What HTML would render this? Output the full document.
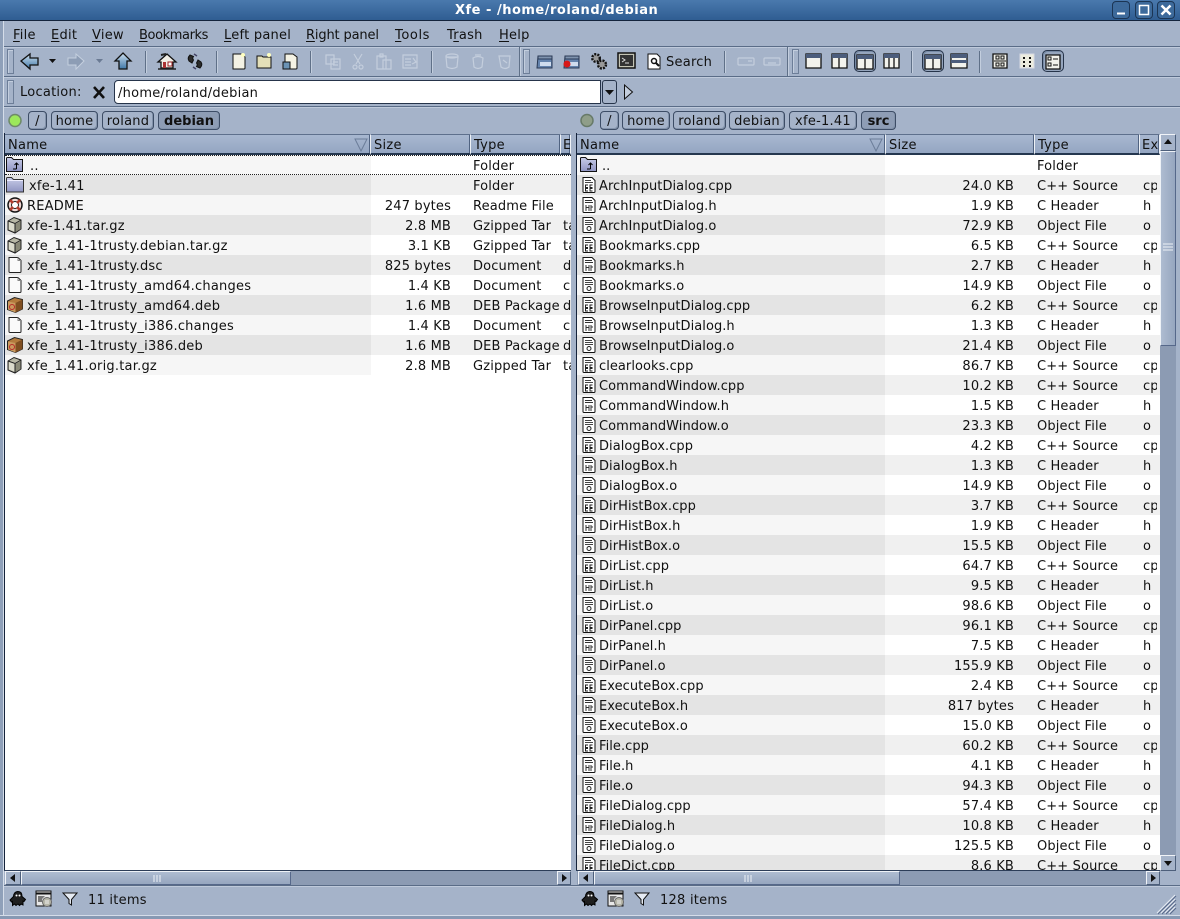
<!DOCTYPE html>
<html><head><meta charset="utf-8"><title>Xfe</title>
<style>
html,body{margin:0;padding:0}
body{width:1180px;height:918px;overflow:hidden;background:#a5b3c9;position:relative;font:13px/20px "DejaVu Sans","Liberation Sans",sans-serif;color:#111;letter-spacing:.25px}
.a{position:absolute;white-space:nowrap}
#title{left:0;top:0;width:1180px;height:20px;background:linear-gradient(#4a79ad,#2f5d92);border-bottom:1.5px solid #14243c}
#title span{position:absolute;left:455px;top:1px;color:#fff;font-weight:700;font-size:13px;letter-spacing:.5px}
.wb{position:absolute;top:1px;width:16px;height:16px;border:1px solid #1b3554;border-radius:4px;background:#3d6a9b}
.line{position:absolute;height:1px;background:#5a6c87;box-shadow:0 1px 0 #bfcadb}
.vs{position:absolute;width:1px;background:#5f7088;box-shadow:1px 0 0 #c3cede}
.grip{position:absolute;width:5px;border:1px solid #6d7e98;box-shadow:inset 1px 1px 0 #c3cede}
.act{position:absolute;width:29px;height:29px;top:47px;box-sizing:border-box;border:1.5px solid #26344a;border-radius:5px;background:#95a5bd;box-shadow:inset 1px 1px 0 #778aa5}
.bc{position:absolute;top:111px;height:19px;box-sizing:border-box;border:1px solid #3d4d66;border-radius:4px;text-align:center;line-height:19px;box-shadow:inset -1px -1px 0 #8393ab;background:#a5b3c9}
.bc.on{font-weight:700;background:#8e9db5;letter-spacing:0}
.hd{position:absolute;top:134px;height:21px;box-sizing:border-box;background:linear-gradient(#a8b8d0,#94a6c2);border-top:1px solid #5e708c;border-bottom:2px solid #25374f;border-right:1px solid #eef2f7;box-shadow:inset -1px 0 0 #506381;padding-left:3px;line-height:21px;overflow:hidden}
.list{position:absolute;top:155px;background:#fff;overflow:hidden;height:715px}
.r{position:relative;height:20px;white-space:nowrap}
.r span{position:absolute;top:0;height:20px;line-height:21px;overflow:hidden;padding-top:1px;box-sizing:content-box}
.r svg{position:absolute;top:1px;width:18px;height:18px}
.L .r:nth-child(even){background:linear-gradient(90deg,#e4e4e4 366px,#f0f0f0 366px)}
.L .r:nth-child(odd){background:linear-gradient(90deg,#f6f6f6 366px,#fff 366px)}
.L .r svg{left:1px}
.L .r span{letter-spacing:.15px}
.L .r .n{left:22px;letter-spacing:.22px}.L .z{left:366px;width:80px;text-align:right}.L .t{left:468px;width:92px}.L .e{left:558px;width:9px}
.R .r:nth-child(even){background:linear-gradient(90deg,#e4e4e4 308px,#f0f0f0 308px)}
.R .r:nth-child(odd){background:linear-gradient(90deg,#f6f6f6 308px,#fff 308px)}
.R .r svg{left:3px}
.R .r span{letter-spacing:.15px}
.R .r .n{left:22px;letter-spacing:.05px}.R .z{left:308px;width:129px;text-align:right}.R .t{left:460px;width:105px}.R .e{left:566px;width:14px}
.sb{position:absolute;box-sizing:border-box;background:#a5b3c9;border:1px solid #f0f3f8;border-right-color:#4d5f7b;border-bottom-color:#4d5f7b}
.tr{position:absolute;background:#8c9bb3}
.th{position:absolute;box-sizing:border-box;background:linear-gradient(#aebcd1,#96a6bf);border:1px solid #eef2f7;border-right-color:#56688a;border-bottom-color:#56688a}
u{text-decoration:underline;text-underline-offset:2px}
</style></head>
<body>
<svg width="0" height="0" style="position:absolute"><defs>
<linearGradient id="fg" x1="0" y1="0" x2="0" y2="1"><stop offset="0" stop-color="#c9cde8"/><stop offset="1" stop-color="#8f94c2"/></linearGradient>
<linearGradient id="ag" x1="0" y1="0" x2="0" y2="1"><stop offset="0" stop-color="#cfe0f0"/><stop offset="1" stop-color="#3f77a8"/></linearGradient>
<symbol id="up" viewBox="0 0 18 18"><path d="M.5 15.500V2.500q0-1 1-1h4l2 2h9v12z" fill="url(#fg)" stroke="#111"/><path d="M10.500 13V7M8.500 9l2-2 2 2M7 13h3.500" fill="none" stroke="#000"/></symbol>
<symbol id="fo" viewBox="0 0 18 18"><path d="M.5 16V2.500q0-1 1-1h4l2 2h10v12.500z" fill="url(#fg)" stroke="#333"/><path d="M1 4.500h16" stroke="#eef"/></symbol>
<symbol id="rd" viewBox="0 0 18 18"><circle cx="9" cy="9" r="7" fill="#f3d9d5" stroke="#111" stroke-width="1.500"/><circle cx="9" cy="9" r="3.500" fill="#fff" stroke="#222"/><path d="M4 4l3 3M14 4l-3 3M4 14l3-3M14 14l-3-3" stroke="#b3392a" stroke-width="2.500"/></symbol>
<symbol id="gz" viewBox="0 0 18 18"><path d="M2 5l6-3.500 7 2.500v9l-6 4-7-3z" fill="#b9b9a6" stroke="#222"/><path d="M2 5l7 2.500 6-3.500M9 7.500V17" fill="none" stroke="#222"/><path d="M9.500 8l5-3v8l-5 3z" fill="#8b8b78"/><path d="M3 6l5.500 2v7.500L3 13.500z" fill="#dcdccc"/></symbol>
<symbol id="dc" viewBox="0 0 18 18"><path d="M3 1.500h9l3 3v11q0 1-1 1H4q-1 0-1-1z" fill="#fafafa" stroke="#222"/><path d="M12 1.500v3h3" fill="none" stroke="#888"/></symbol>
<symbol id="db" viewBox="0 0 18 18"><path d="M1.500 5l7-3.500 8 2v9.500l-7 3.500-8-3z" fill="#b27a3c" stroke="#222"/><path d="M9.500 7l7-3.500v9.500l-7 3.500z" fill="#7f4e20"/><path d="M2 5.500l7.500 1.500v9.500l-7.500-3z" fill="#c99a5e"/><circle cx="6" cy="11" r="2.500" fill="none" stroke="#b92a2a"/></symbol>
<symbol id="cp" viewBox="0 0 18 18"><path d="M3 1.500h9l3 3v11q0 1-1 1H4q-1 0-1-1z" fill="#fff" stroke="#111"/><path d="M5 4.500h6M5 6.500h8" stroke="#444"/><path d="M8 9H5.500v2.500H8M8 12.500H5.500V15H8M12.500 9H10v2.500h2.500M12.500 12.500H10V15h2.500" fill="none" stroke="#222"/></symbol>
<symbol id="hh" viewBox="0 0 18 18"><path d="M3 1.500h9l3 3v11q0 1-1 1H4q-1 0-1-1z" fill="#fff" stroke="#111"/><path d="M5 4.500h7M5 6.500h8M6 9v6M6 11.500h3M9 9v6M11 9v6M11 11h2" fill="none" stroke="#333"/></symbol>
<symbol id="oo" viewBox="0 0 18 18"><path d="M3 1.500h9l3 3v11q0 1-1 1H4q-1 0-1-1z" fill="#fff" stroke="#111"/><path d="M5 4.500h7M5 6.500h8M5 8.500h8" stroke="#444"/><circle cx="9" cy="12.500" r="2" fill="none" stroke="#222"/></symbol>
<symbol id="gh" viewBox="0 0 18 18"><path d="M9 1.500c3 0 4 2.500 4 5l3.500 3-1.500 2-1-.5v4l-2-1-1.500 1.500L9 14l-2 1.500L5.500 14l-2 1.500v-4l-1 .5L1 10l3.500-3.500c0-2.500 1.500-5 4.500-5z" fill="#1f1f1f" stroke="#000"/><circle cx="7.500" cy="5.500" r="1" fill="#fff"/><circle cx="10.500" cy="5.500" r="1" fill="#fff"/></symbol>
<symbol id="cf" viewBox="0 0 18 18"><path d="M1 1h15v15H1z" fill="#e8e8e8" stroke="#111"/><path d="M1 3.500h15" stroke="#111" stroke-width="2"/><path d="M3 6h7l-3 3v3H3z" fill="#777"/><circle cx="12" cy="12" r="4.500" fill="#b5b5a8" stroke="#666"/><path d="M10 11h4M10 13h4" stroke="#eee"/></symbol>
<symbol id="fl" viewBox="0 0 16 16"><path d="M1 2h14L9.500 8.500V14L7 12.500V8.500z" fill="#e6ebf3" stroke="#111"/></symbol>
</defs></svg>

<div class="a" id="title"><span>Xfe - /home/roland/debian</span>
<div class="wb" style="left:1112px"><svg width="16" height="16" style="display:block"><path d="M4 11.500h8" stroke="#fff" stroke-width="2"/></svg></div>
<div class="wb" style="left:1135px"><svg width="16" height="16" style="display:block"><path d="M3.500 3.500h9v9h-9z" fill="none" stroke="#fff" stroke-width="1.500"/></svg></div>
<div class="wb" style="left:1157px"><svg width="16" height="16" style="display:block"><path d="M3.500 3.500l9 9M12.500 3.500l-9 9" stroke="#fff" stroke-width="2.500"/></svg></div>
</div>
<div class="a" style="left:0;top:21px;width:3px;height:897px;background:#8fa0b9;border-right:1px solid #d5dde9"></div>

<div class="a" style="left:13px;top:26px"><u>F</u>ile</div>
<div class="a" style="left:51px;top:26px"><u>E</u>dit</div>
<div class="a" style="left:92px;top:26px"><u>V</u>iew</div>
<div class="a" style="left:139px;top:26px;letter-spacing:-.4px"><u>B</u>ookmarks</div>
<div class="a" style="left:224px;top:26px"><u>L</u>eft panel</div>
<div class="a" style="left:306px;top:26px;letter-spacing:-.15px"><u>R</u>ight panel</div>
<div class="a" style="left:395px;top:26px;letter-spacing:.6px"><u>T</u>ools</div>
<div class="a" style="left:447px;top:26px">T<u>r</u>ash</div>
<div class="a" style="left:499px;top:26px"><u>H</u>elp</div>

<div class="line" style="left:4px;top:46px;width:1176px"></div>
<div class="line" style="left:4px;top:76px;width:1176px"></div>
<div class="line" style="left:4px;top:106px;width:1176px"></div>
<div class="grip" style="left:7px;top:49px;height:23px"></div>
<div class="grip" style="left:7px;top:80px;height:22px"></div>
<div class="grip" style="left:523px;top:49px;height:23px"></div>
<div class="grip" style="left:792px;top:49px;height:23px"></div>
<div class="vs" style="left:145px;top:51px;height:22px"></div>
<div class="vs" style="left:216px;top:51px;height:22px"></div>
<div class="vs" style="left:310px;top:51px;height:22px"></div>
<div class="vs" style="left:431px;top:51px;height:22px"></div>
<div class="vs" style="left:724px;top:51px;height:22px"></div>
<div class="vs" style="left:911px;top:51px;height:22px"></div>
<div class="vs" style="left:979px;top:51px;height:22px"></div>
<div class="vs" style="left:519px;top:47px;height:29px"></div>
<div class="vs" style="left:787px;top:47px;height:29px"></div>
<div class="act" style="left:854px;top:50px;width:22px;height:22px"></div>
<div class="act" style="left:922px;top:50px;width:22px;height:22px"></div>
<div class="act" style="left:1042px;top:50px;width:22px;height:22px"></div>

<svg class="a" style="left:0;top:46px" width="1180" height="32" viewBox="0 46 1180 32">
<path d="M21 61l9-7v4h8v7h-8v4z" fill="url(#ag)" stroke="#111" stroke-width="1.300"/>
<path d="M49 59h7l-3.500 4z" fill="#111"/>
<path d="M84 61l-8-7v4h-8v7h8v4z" fill="#8d9db5" stroke="#c5d0df"/>
<path d="M96 59h7l-3.500 4z" fill="#6b7b94"/>
<path d="M123 53l8 8h-4v8h-8v-8h-4z" fill="url(#ag)" stroke="#111" stroke-width="1.300"/>
<path d="M158 62l9-8 9 8h-3v6h-12v-6z" fill="#f2efe6" stroke="#111" stroke-width="1.300"/><path d="M161 55l5-1" stroke="#222" stroke-width="2"/><path d="M168 62h4v4h-4z" fill="#fff" stroke="#922"/><path d="M163 62h3v6h-3z" fill="#a33"/><path d="M158 69h18" stroke="#222" stroke-width="1.500"/>
<path d="M190 55q-3 3-1 6l3 2 1.500-3q-1.500-1.500 0-3.500zM200 68q3-3 1-6l-3-2-1.500 3q1.500 1.500 0 3.500z" fill="#2a2a2a" stroke="#111"/><path d="M194 54l3 2M196 69l-3-2" stroke="#446" stroke-width="1.500"/>
<path d="M233 54h8l4 3v11q0 1-1 1h-11z" fill="#f4f2e4" stroke="#111"/><circle cx="243" cy="55" r="2" fill="#ffffc0"/>
<path d="M257 68V56h5l1 1h8v11z" fill="#e3dfb9" stroke="#111"/><circle cx="269" cy="55" r="2" fill="#ffffc0"/>
<path d="M285 54h8l4 3v11q0 1-1 1h-11z" fill="#f4f2e4" stroke="#111"/><path d="M283 62h7v7h-7z" fill="#6b93b5" stroke="#111"/>
<g fill="none" stroke="#c4cedd" stroke-width="1.200"><path d="M326 55h8v9h-8zM331 59h9v10h-9zM333 62h5M333 65h5"/><path d="M354 54l6 10M362 54l-6 10"/><circle cx="355" cy="67" r="2"/><circle cx="361" cy="67" r="2"/><path d="M377 56h9v13h-9zM383 60h8v9h-8zM380 54h3v3h-3z"/><path d="M403 55h14v13h-14zM405 59h6M405 62h6M405 65h6M413 58l3 4-4 2"/>
<path d="M446 57h12l-1 10q-5 3-10 0z"/><ellipse cx="452" cy="56" rx="6" ry="2"/><path d="M473 58q5-3 10 0l-1 9q-4 3-8 0zM475 55l6 0"/><path d="M499 56h11l-1 11q-4 3-8 0zM503 60l4 3"/>
<path d="M739 58h14q1 0 1 1v5q0 1-1 1h-14q-1 0-1-1v-5q0-1 1-1zM748 61h4"/><path d="M765 58h14q1 0 1 1v5q0 1-1 1h-14q-1 0-1-1v-5q0-1 1-1zM768 63h8"/></g>
<path d="M538 56h14v12h-15z" fill="#6483ad" stroke="#2a3a55"/><path d="M538 56h14v3h-14z" fill="#7f93ae" stroke="#2a3a55"/><path d="M540 62h11v4h-11z" fill="#cfdcee"/>
<path d="M565 56h14v12h-15z" fill="#6483ad" stroke="#2a3a55"/><path d="M565 56h14v3h-14z" fill="#7f93ae" stroke="#2a3a55"/><path d="M570 62h8v4h-8z" fill="#cfdcee"/><circle cx="567" cy="64" r="3.500" fill="#d81818"/>
<circle cx="596" cy="58" r="3.800" fill="#999" stroke="#111" stroke-width="2.400" stroke-dasharray="2 1.200"/><circle cx="602" cy="64.500" r="4" fill="#999" stroke="#111" stroke-width="2.400" stroke-dasharray="2 1.200"/>
<path d="M618 53h17v15h-17z" fill="#c4c4b4" stroke="#111" stroke-width="1.500"/><path d="M620 55h13v11h-13z" fill="#333"/><path d="M622 58l3 2-3 2M625 63h4" fill="none" stroke="#ddd"/>
<path d="M648 54h9l3 3v12h-12z" fill="#fff" stroke="#111"/><circle cx="654" cy="61" r="2.500" fill="none" stroke="#111" stroke-width="1.500"/><path d="M656 63l3 3" stroke="#111" stroke-width="2"/>
<g stroke="#111" stroke-width="1.300" fill="#f2f2ec"><path d="M806 54h15v14h-15z"/><path d="M832 54h15v14h-15zM839 58v10"/><path d="M857 55h16v14h-16zM865 59v10"/><path d="M884 54h15v14h-15zM889 58v10M894 58v10"/><path d="M925 55h16v14h-16zM933 59v10"/><path d="M951 54h16v14h-16zM951 62h16"/></g>
<path d="M806 54h15v4h-15zM832 54h15v4h-15zM857 55h16v4h-16zM884 54h15v4h-15zM925 55h16v4h-16zM951 54h16v4h-16zM951 60h16v3h-16z" fill="#4c5d7c"/>
<path d="M993 54h14v14h-14z" fill="#f2f2ec" stroke="#111" stroke-width="1.300"/><path d="M996 56h3v3h-3zM1001 56h3v3h-3zM996 63h3v3h-3zM1001 63h3v3h-3zM994 61h12" fill="none" stroke="#111"/>
<path d="M1020 54h14v14h-14z" fill="#ececdf" stroke="#d6dae2"/><path d="M1024 57v2M1024 61v2M1024 65v2M1030 57v2M1030 61v2M1030 65v2" stroke="#111" stroke-width="2"/>
<path d="M1046 55h14v14h-14z" fill="#f2f2ec" stroke="#111" stroke-width="1.300"/><path d="M1048 57h3v3h-3zM1048 63h3v3h-3zM1053 59h5M1053 65h5" fill="none" stroke="#111"/>
</svg>
<div class="a" style="left:666px;top:53px">Search</div>

<div class="a" style="left:20px;top:83px">Location:</div>
<svg class="a" style="left:92px;top:85px" width="15" height="15"><path d="M2 2l10 11M12 2L2 13" stroke="#111" stroke-width="2.600"/></svg>
<div class="a" style="left:114px;top:80px;width:487px;height:24px;box-sizing:border-box;background:#fff;border:1px solid #26344a;border-radius:4px 0 0 4px;padding-left:3px;line-height:23px;padding-top:1px">/home/roland/debian</div>
<div class="a" style="left:602px;top:80px;width:15px;height:24px;box-sizing:border-box;border:1px solid #26344a;border-radius:3px;background:#a5b3c9"><svg width="13" height="22" style="display:block"><path d="M2 9h9l-4.500 5z" fill="#111"/></svg></div>
<svg class="a" style="left:623px;top:84px" width="12" height="16"><path d="M1.500 1v14l8-7z" fill="#c4cedd" stroke="#111"/></svg>

<svg class="a" style="left:6px;top:112px" width="18" height="18"><circle cx="9" cy="8.500" r="6" fill="#9ce85c" stroke="#6f8a6a" stroke-width="1.500"/></svg>
<div class="bc" style="left:28px;width:19px">/</div>
<div class="bc" style="left:51px;width:47px">home</div>
<div class="bc" style="left:102px;width:52px">roland</div>
<div class="bc on" style="left:158px;width:62px">debian</div>
<svg class="a" style="left:578px;top:112px" width="18" height="18"><circle cx="9" cy="8.500" r="6" fill="#8f9e89" stroke="#677a68" stroke-width="1.500"/></svg>
<div class="bc" style="left:600px;width:19px">/</div>
<div class="bc" style="left:622px;width:48px">home</div>
<div class="bc" style="left:673px;width:53px">roland</div>
<div class="bc" style="left:729px;width:56px">debian</div>
<div class="bc" style="left:789px;width:68px">xfe-1.41</div>
<div class="bc on" style="left:861px;width:35px">src</div>

<div class="a" style="left:4px;top:133px;width:1px;height:738px;background:#15233b"></div>
<div class="a" style="left:576px;top:133px;width:1px;height:738px;background:#15233b"></div>
<div class="hd" style="left:5px;width:366px">Name<svg style="position:absolute;left:349px;top:3px" width="14" height="14"><path d="M1 1h12L7 13z" fill="none" stroke="#6b7d99"/></svg></div>
<div class="hd" style="left:371px;width:100px">Size</div>
<div class="hd" style="left:471px;width:90px">Type</div>
<div class="hd" style="left:561px;width:10px;padding-left:2px">E</div>
<div class="hd" style="left:577px;width:309px">Name<svg style="position:absolute;left:292px;top:3px" width="14" height="14"><path d="M1 1h12L7 13z" fill="none" stroke="#6b7d99"/></svg></div>
<div class="hd" style="left:886px;width:149px">Size</div>
<div class="hd" style="left:1035px;width:105px">Type</div>
<div class="hd" style="left:1140px;width:20px;padding-left:2px">Ex</div>

<div class="list L" style="left:5px;width:566px">
<div class="r"><svg><use href="#up"/></svg><span class="n" style="left:25px">..</span><span class="t">Folder</span></div>
<div class="r"><svg><use href="#fo"/></svg><span class="n" style="left:24px">xfe-1.41</span><span class="t">Folder</span></div>
<div class="r"><svg><use href="#rd"/></svg><span class="n">README</span><span class="z">247 bytes</span><span class="t">Readme File</span></div>
<div class="r"><svg><use href="#gz"/></svg><span class="n">xfe-1.41.tar.gz</span><span class="z">2.8 MB</span><span class="t">Gzipped Tar</span><span class="e">tar</span></div>
<div class="r"><svg><use href="#gz"/></svg><span class="n">xfe_1.41-1trusty.debian.tar.gz</span><span class="z">3.1 KB</span><span class="t">Gzipped Tar</span><span class="e">tar</span></div>
<div class="r"><svg><use href="#dc"/></svg><span class="n">xfe_1.41-1trusty.dsc</span><span class="z">825 bytes</span><span class="t">Document</span><span class="e">dsc</span></div>
<div class="r"><svg><use href="#dc"/></svg><span class="n">xfe_1.41-1trusty_amd64.changes</span><span class="z">1.4 KB</span><span class="t">Document</span><span class="e">changes</span></div>
<div class="r"><svg><use href="#db"/></svg><span class="n">xfe_1.41-1trusty_amd64.deb</span><span class="z">1.6 MB</span><span class="t">DEB Package</span><span class="e">deb</span></div>
<div class="r"><svg><use href="#dc"/></svg><span class="n">xfe_1.41-1trusty_i386.changes</span><span class="z">1.4 KB</span><span class="t">Document</span><span class="e">changes</span></div>
<div class="r"><svg><use href="#db"/></svg><span class="n">xfe_1.41-1trusty_i386.deb</span><span class="z">1.6 MB</span><span class="t">DEB Package</span><span class="e">deb</span></div>
<div class="r"><svg><use href="#gz"/></svg><span class="n">xfe_1.41.orig.tar.gz</span><span class="z">2.8 MB</span><span class="t">Gzipped Tar</span><span class="e">tar</span></div>
</div>
<div class="a" style="left:5px;top:155px;width:566px;height:20px;box-sizing:border-box;border-top:1px dotted #222;border-bottom:1px dotted #222"></div>

<div class="list R" style="left:577px;width:583px">
<div class="r"><svg><use href="#up"/></svg><span class="n" style="left:25px">..</span><span class="t">Folder</span></div>
<div class="r"><svg><use href="#cp"/></svg><span class="n">ArchInputDialog.cpp</span><span class="z">24.0 KB</span><span class="t">C++ Source</span><span class="e">cpp</span></div>
<div class="r"><svg><use href="#hh"/></svg><span class="n">ArchInputDialog.h</span><span class="z">1.9 KB</span><span class="t">C Header</span><span class="e">h</span></div>
<div class="r"><svg><use href="#oo"/></svg><span class="n">ArchInputDialog.o</span><span class="z">72.9 KB</span><span class="t">Object File</span><span class="e">o</span></div>
<div class="r"><svg><use href="#cp"/></svg><span class="n">Bookmarks.cpp</span><span class="z">6.5 KB</span><span class="t">C++ Source</span><span class="e">cpp</span></div>
<div class="r"><svg><use href="#hh"/></svg><span class="n">Bookmarks.h</span><span class="z">2.7 KB</span><span class="t">C Header</span><span class="e">h</span></div>
<div class="r"><svg><use href="#oo"/></svg><span class="n">Bookmarks.o</span><span class="z">14.9 KB</span><span class="t">Object File</span><span class="e">o</span></div>
<div class="r"><svg><use href="#cp"/></svg><span class="n">BrowseInputDialog.cpp</span><span class="z">6.2 KB</span><span class="t">C++ Source</span><span class="e">cpp</span></div>
<div class="r"><svg><use href="#hh"/></svg><span class="n">BrowseInputDialog.h</span><span class="z">1.3 KB</span><span class="t">C Header</span><span class="e">h</span></div>
<div class="r"><svg><use href="#oo"/></svg><span class="n">BrowseInputDialog.o</span><span class="z">21.4 KB</span><span class="t">Object File</span><span class="e">o</span></div>
<div class="r"><svg><use href="#cp"/></svg><span class="n">clearlooks.cpp</span><span class="z">86.7 KB</span><span class="t">C++ Source</span><span class="e">cpp</span></div>
<div class="r"><svg><use href="#cp"/></svg><span class="n">CommandWindow.cpp</span><span class="z">10.2 KB</span><span class="t">C++ Source</span><span class="e">cpp</span></div>
<div class="r"><svg><use href="#hh"/></svg><span class="n">CommandWindow.h</span><span class="z">1.5 KB</span><span class="t">C Header</span><span class="e">h</span></div>
<div class="r"><svg><use href="#oo"/></svg><span class="n">CommandWindow.o</span><span class="z">23.3 KB</span><span class="t">Object File</span><span class="e">o</span></div>
<div class="r"><svg><use href="#cp"/></svg><span class="n">DialogBox.cpp</span><span class="z">4.2 KB</span><span class="t">C++ Source</span><span class="e">cpp</span></div>
<div class="r"><svg><use href="#hh"/></svg><span class="n">DialogBox.h</span><span class="z">1.3 KB</span><span class="t">C Header</span><span class="e">h</span></div>
<div class="r"><svg><use href="#oo"/></svg><span class="n">DialogBox.o</span><span class="z">14.9 KB</span><span class="t">Object File</span><span class="e">o</span></div>
<div class="r"><svg><use href="#cp"/></svg><span class="n">DirHistBox.cpp</span><span class="z">3.7 KB</span><span class="t">C++ Source</span><span class="e">cpp</span></div>
<div class="r"><svg><use href="#hh"/></svg><span class="n">DirHistBox.h</span><span class="z">1.9 KB</span><span class="t">C Header</span><span class="e">h</span></div>
<div class="r"><svg><use href="#oo"/></svg><span class="n">DirHistBox.o</span><span class="z">15.5 KB</span><span class="t">Object File</span><span class="e">o</span></div>
<div class="r"><svg><use href="#cp"/></svg><span class="n">DirList.cpp</span><span class="z">64.7 KB</span><span class="t">C++ Source</span><span class="e">cpp</span></div>
<div class="r"><svg><use href="#hh"/></svg><span class="n">DirList.h</span><span class="z">9.5 KB</span><span class="t">C Header</span><span class="e">h</span></div>
<div class="r"><svg><use href="#oo"/></svg><span class="n">DirList.o</span><span class="z">98.6 KB</span><span class="t">Object File</span><span class="e">o</span></div>
<div class="r"><svg><use href="#cp"/></svg><span class="n">DirPanel.cpp</span><span class="z">96.1 KB</span><span class="t">C++ Source</span><span class="e">cpp</span></div>
<div class="r"><svg><use href="#hh"/></svg><span class="n">DirPanel.h</span><span class="z">7.5 KB</span><span class="t">C Header</span><span class="e">h</span></div>
<div class="r"><svg><use href="#oo"/></svg><span class="n">DirPanel.o</span><span class="z">155.9 KB</span><span class="t">Object File</span><span class="e">o</span></div>
<div class="r"><svg><use href="#cp"/></svg><span class="n">ExecuteBox.cpp</span><span class="z">2.4 KB</span><span class="t">C++ Source</span><span class="e">cpp</span></div>
<div class="r"><svg><use href="#hh"/></svg><span class="n">ExecuteBox.h</span><span class="z">817 bytes</span><span class="t">C Header</span><span class="e">h</span></div>
<div class="r"><svg><use href="#oo"/></svg><span class="n">ExecuteBox.o</span><span class="z">15.0 KB</span><span class="t">Object File</span><span class="e">o</span></div>
<div class="r"><svg><use href="#cp"/></svg><span class="n">File.cpp</span><span class="z">60.2 KB</span><span class="t">C++ Source</span><span class="e">cpp</span></div>
<div class="r"><svg><use href="#hh"/></svg><span class="n">File.h</span><span class="z">4.1 KB</span><span class="t">C Header</span><span class="e">h</span></div>
<div class="r"><svg><use href="#oo"/></svg><span class="n">File.o</span><span class="z">94.3 KB</span><span class="t">Object File</span><span class="e">o</span></div>
<div class="r"><svg><use href="#cp"/></svg><span class="n">FileDialog.cpp</span><span class="z">57.4 KB</span><span class="t">C++ Source</span><span class="e">cpp</span></div>
<div class="r"><svg><use href="#hh"/></svg><span class="n">FileDialog.h</span><span class="z">10.8 KB</span><span class="t">C Header</span><span class="e">h</span></div>
<div class="r"><svg><use href="#oo"/></svg><span class="n">FileDialog.o</span><span class="z">125.5 KB</span><span class="t">Object File</span><span class="e">o</span></div>
<div class="r"><svg><use href="#cp"/></svg><span class="n">FileDict.cpp</span><span class="z">8.6 KB</span><span class="t">C++ Source</span><span class="e">cpp</span></div>
</div>

<!-- left h scrollbar -->
<div class="tr" style="left:5px;top:871px;width:566px;height:14px"></div>
<div class="a" style="left:4px;top:870px;width:567px;height:1px;background:#2c3d58"></div>
<div class="sb" style="left:5px;top:871px;width:16px;height:14px"><svg width="14" height="12" style="display:block"><path d="M9 2v8L4 6z" fill="#111"/></svg></div>
<div class="th" style="left:21px;top:871px;width:270px;height:14px"><svg width="10" height="12" style="position:absolute;left:130px;top:0"><path d="M2 3v7M5 3v7M8 3v7" stroke="#eef2f7"/></svg></div>
<div class="sb" style="left:557px;top:871px;width:14px;height:14px"><svg width="12" height="12" style="display:block"><path d="M4 2v8l5-4z" fill="#111"/></svg></div>

<!-- right h scrollbar -->
<div class="tr" style="left:577px;top:871px;width:583px;height:14px"></div>
<div class="a" style="left:576px;top:870px;width:584px;height:1px;background:#2c3d58"></div>
<div class="sb" style="left:578px;top:871px;width:16px;height:14px"><svg width="14" height="12" style="display:block"><path d="M9 2v8L4 6z" fill="#111"/></svg></div>
<div class="th" style="left:594px;top:871px;width:306px;height:14px"><svg width="10" height="12" style="position:absolute;left:148px;top:0"><path d="M2 3v7M5 3v7M8 3v7" stroke="#eef2f7"/></svg></div>
<div class="sb" style="left:1146px;top:871px;width:14px;height:14px"><svg width="12" height="12" style="display:block"><path d="M4 2v8l5-4z" fill="#111"/></svg></div>

<!-- right v scrollbar -->
<div class="tr" style="left:1160px;top:134px;width:16px;height:737px"></div>
<div class="sb" style="left:1160px;top:134px;width:16px;height:17px"><svg width="14" height="15" style="display:block"><path d="M3 9h8L7 4z" fill="#111"/></svg></div>
<div class="th" style="left:1160px;top:151px;width:16px;height:195px;background:linear-gradient(90deg,#aebcd1,#96a6bf)"><svg width="14" height="10" style="position:absolute;left:0;top:90px"><path d="M2 2h10M2 5h10M2 8h10" stroke="#eef2f7"/></svg></div>
<div class="sb" style="left:1160px;top:855px;width:16px;height:16px"><svg width="14" height="14" style="display:block"><path d="M3 5h8l-4 5z" fill="#111"/></svg></div>

<div class="line" style="left:4px;top:885px;width:1176px"></div>
<svg class="a" style="left:9px;top:890px" width="18" height="18"><use href="#gh"/></svg>
<svg class="a" style="left:35px;top:890px" width="18" height="18"><use href="#cf"/></svg>
<svg class="a" style="left:62px;top:891px" width="16" height="16"><use href="#fl"/></svg>
<div class="a" style="left:88px;top:891px">11 items</div>
<svg class="a" style="left:581px;top:890px" width="18" height="18"><use href="#gh"/></svg>
<svg class="a" style="left:607px;top:890px" width="18" height="18"><use href="#cf"/></svg>
<svg class="a" style="left:634px;top:891px" width="16" height="16"><use href="#fl"/></svg>
<div class="a" style="left:660px;top:891px">128 items</div>
<svg class="a" style="left:1155px;top:893px" width="22" height="22"><path d="M20 2L2 20M20 6L6 20M20 10L10 20M20 14L14 20" stroke="#e6ebf3" stroke-width="1"/><path d="M21 3L3 21M21 7L7 21M21 11L11 21M21 15L15 21" stroke="#56688a" stroke-width="1"/></svg>
<div class="a" style="left:0;top:915px;width:1180px;height:3px;background:#8799b3;border-top:1px solid #d5dde9"></div>
</body></html>
